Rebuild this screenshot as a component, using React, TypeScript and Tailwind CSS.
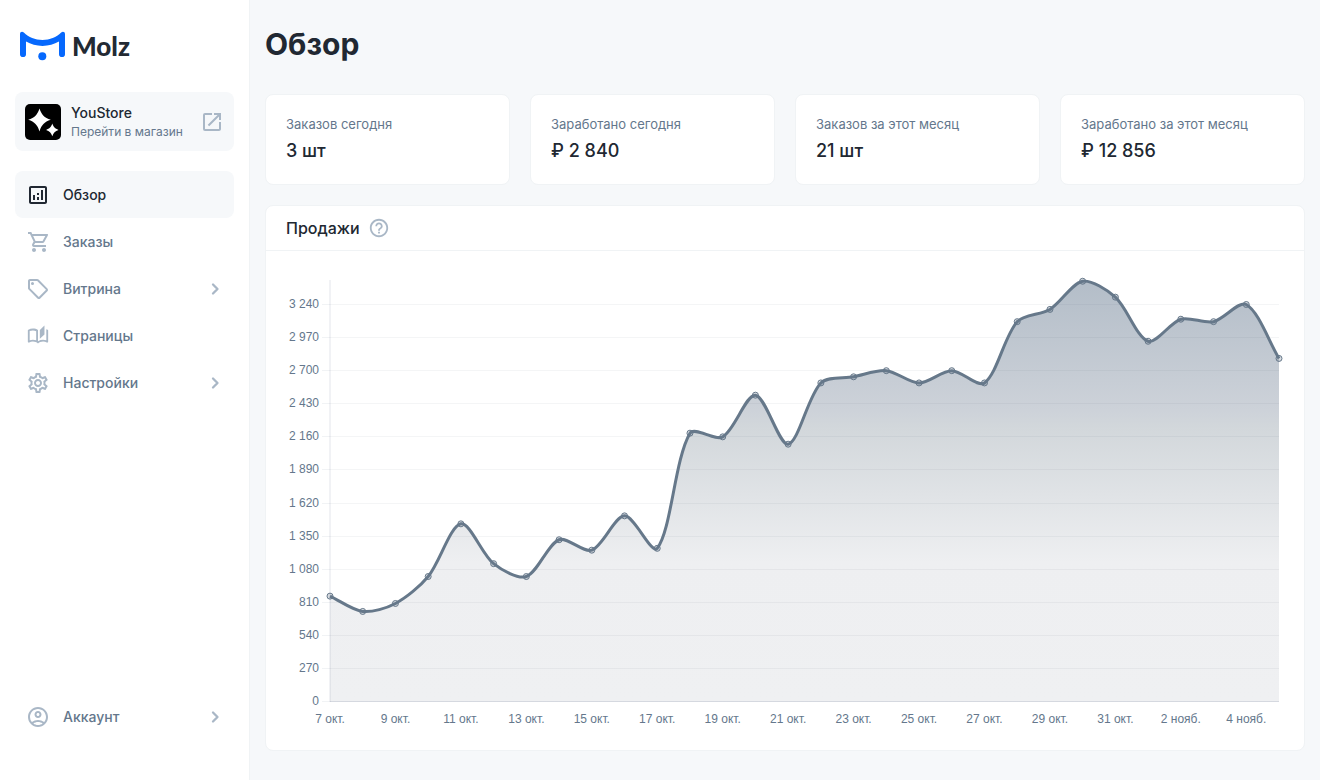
import { useEffect, useRef, useState } from "react";
import type { ReactNode } from "react";
import type { IconType } from "react-icons";
import {
  MdHelpOutline,
  MdOpenInNew,
  MdOutlineAccountCircle,
  MdOutlineAnalytics,
  MdOutlineAutoStories,
  MdOutlineSell,
  MdOutlineSettings,
  MdOutlineShoppingCart,
} from "react-icons/md";

const sales = [
  860, 735, 800, 1020, 1450, 1125, 1020, 1320, 1235, 1515, 1250, 2190, 2160, 2500, 2100,
  2600, 2650, 2700, 2600, 2700, 2600, 3100, 3200, 3430, 3300, 2940, 3120, 3100, 3240, 2800,
];

const stats = [
  { label: "Заказов сегодня", value: "3 шт" },
  { label: "Заработано сегодня", value: "₽ 2 840" },
  { label: "Заказов за этот месяц", value: "21 шт" },
  { label: "Заработано за этот месяц", value: "₽ 12 856" },
];

const PLOT = { left: 44, right: 5, top: 9, bottom: 430, height: 460 };
const STEP = 270;
const MAX = 3436;

type Point = { x: number; y: number };

function dayLabel(index: number) {
  const day = index + 7;
  return day <= 31 ? `${day} окт.` : `${day - 31} нояб.`;
}

function formatValue(value: number) {
  return value >= 1000
    ? `${Math.floor(value / 1000)} ${String(value % 1000).padStart(3, "0")}`
    : String(value);
}

/* Cubic spline whose handles are weighted by the distance to each neighbour. */
function smoothPath(points: Point[], tension = 0.3) {
  const handles = points.map((p, i) => {
    const prev = points[i - 1] ?? p;
    const next = points[i + 1] ?? p;
    const before = Math.hypot(p.x - prev.x, p.y - prev.y);
    const after = Math.hypot(next.x - p.x, next.y - p.y);
    const total = before + after || 1;
    const a = (tension * before) / total;
    const b = (tension * after) / total;
    const clamp = (y: number) => Math.max(PLOT.top, Math.min(PLOT.bottom, y));
    return {
      inX: p.x - a * (next.x - prev.x),
      inY: clamp(p.y - a * (next.y - prev.y)),
      outX: p.x + b * (next.x - prev.x),
      outY: clamp(p.y + b * (next.y - prev.y)),
    };
  });
  return points
    .map((p, i) =>
      i === 0
        ? `M${p.x},${p.y}`
        : `C${handles[i - 1].outX},${handles[i - 1].outY} ${handles[i].inX},${handles[i].inY} ${p.x},${p.y}`,
    )
    .join(" ");
}

function SalesChart() {
  const box = useRef<HTMLDivElement>(null);
  const [width, setWidth] = useState(998);

  useEffect(() => {
    const node = box.current;
    if (!node) return;
    const update = () => setWidth(node.clientWidth);
    update();
    const observer = new ResizeObserver(update);
    observer.observe(node);
    return () => observer.disconnect();
  }, []);

  const right = width - PLOT.right;
  const scaleY = (v: number) => PLOT.bottom + 0.5 - (v / MAX) * (PLOT.bottom - PLOT.top);
  const points = sales.map((v, i) => ({
    x: PLOT.left + (i * (right - PLOT.left)) / (sales.length - 1),
    y: scaleY(v),
  }));
  const line = smoothPath(points);
  const ticks = Array.from({ length: 13 }, (_, i) => i * STEP);

  return (
    <div ref={box} className="w-full min-w-0">
      <svg
        width={width}
        height={PLOT.height}
        role="img"
        aria-label="Продажи"
        className="block overflow-visible font-['Liberation_Sans',Arial,sans-serif] text-[12px]"
      >
        <defs>
          <linearGradient
            id="area"
            gradientUnits="userSpaceOnUse"
            x1="0"
            x2="0"
            y1={PLOT.top}
            y2={PLOT.bottom}
          >
            <stop offset="0" stopColor="#b3bdc8" />
            <stop offset="0.31" stopColor="#cdd2d9" />
            <stop offset="0.35" stopColor="#d2d7db" />
            <stop offset="0.67" stopColor="#eeeff1" />
            <stop offset="1" stopColor="#eff0f2" />
          </linearGradient>
        </defs>
        <path
          d={`${line} L${right},${PLOT.bottom + 0.5} L${PLOT.left},${PLOT.bottom + 0.5} Z`}
          fill="url(#area)"
        />
        {ticks.map((v) => {
          const y = Math.round(scaleY(v) - 0.5) + 0.5;
          return (
            <g key={v}>
              <line
                x1={PLOT.left - 8}
                x2={PLOT.left}
                y1={y}
                y2={y}
                stroke="#3c506e"
                strokeOpacity={0.07}
              />
              <line
                x1={PLOT.left}
                x2={right}
                y1={y}
                y2={y}
                stroke="#3c506e"
                strokeOpacity={v === 0 ? 0.18 : 0.06}
              />
              <text x={PLOT.left - 11} y={y + 3.5} textAnchor="end" fill="#64778c">
                {formatValue(v)}
              </text>
            </g>
          );
        })}
        <line
          x1={PLOT.left}
          x2={PLOT.left}
          y1={PLOT.top}
          y2={PLOT.bottom + 1}
          stroke="#3c506e"
          strokeOpacity={0.14}
        />
        <path d={line} fill="none" stroke="#66788a" strokeWidth={3} />
        {points.map((p, i) => (
          <circle
            key={i}
            cx={p.x}
            cy={p.y}
            r={3}
            fill="#66788a"
            fillOpacity={0.25}
            stroke="#66788a"
            strokeWidth={1}
          />
        ))}
        {points.map((p, i) =>
          i % 2 === 0 ? (
            <text key={i} x={p.x} y={PLOT.bottom + 22} textAnchor="middle" fill="#64778c">
              {dayLabel(i)}
            </text>
          ) : null,
        )}
      </svg>
    </div>
  );
}

function Logo() {
  return (
    <a href="#" aria-label="Molz" className="mx-[5px] flex h-8 items-center gap-[7px]">
      <svg width="45" height="30" viewBox="0 0 45 30" className="shrink-0">
        <path
          d="M0 3.2C0 .8 2.3 .2 3.8 1.6C8.8 6.3 15 9 22.5 9C30 9 36.2 6.3 41.2 1.6C42.7 .2 45 .8 45 3.2V23.2Q45 26 42 26Q39 26 39 23.2V10.6C34.2 13.4 28.5 15 22.5 15C16.5 15 10.8 13.4 6 10.6V23.2Q6 26 3 26Q0 26 0 23.2Z"
          fill="#0668fd"
        />
        <circle cx="22.3" cy="25.2" r="4" fill="#0668fd" />
      </svg>
      <span className="font-['Lato',sans-serif] text-[26px] leading-8 font-black text-[#232a33]">
        Molz
      </span>
    </a>
  );
}

function Chevron() {
  return (
    <svg width="24" height="24" viewBox="0 0 24 24" className="text-[#a9b7c6]">
      <path
        d="M11 7.5L15.5 12L11 16.5"
        fill="none"
        stroke="currentColor"
        strokeWidth="2.3"
        strokeLinecap="round"
        strokeLinejoin="round"
      />
    </svg>
  );
}

function NavItem({
  icon: Icon,
  viewBox = "0 0 24 24",
  children,
  active = false,
  expandable = false,
}: {
  icon: IconType;
  viewBox?: string;
  children: ReactNode;
  active?: boolean;
  expandable?: boolean;
}) {
  const tone = active ? "bg-[#f6f8fa] text-[#212832]" : "text-[#64778c]";
  return (
    <a
      href="#"
      aria-current={active ? "page" : undefined}
      className={`flex h-[47px] items-center rounded-lg pr-2 pl-[11px] text-[14px] font-medium ${tone}`}
    >
      <Icon
        size={24}
        viewBox={viewBox}
        className={active ? "text-[#212832]" : "text-[#a9b7c6]"}
      />
      <span className="ml-[13px] flex-1">{children}</span>
      {expandable && <Chevron />}
    </a>
  );
}

export default function App() {
  return (
    <div className="flex min-h-screen bg-[#f6f8fa] font-['Inter',sans-serif] text-[#212832]">
      <aside className="flex w-[250px] shrink-0 flex-col border-r border-[#f0f3f5] bg-white px-[15px] pt-[30px] pb-10">
        <Logo />
        <a
          href="#"
          className="mt-[30px] flex h-[59px] items-center rounded-lg bg-[#f6f8fa] px-[10px]"
        >
          <svg width="36" height="36" viewBox="0 0 36 36" className="shrink-0">
            <rect width="36" height="36" rx="5" fill="#000" />
            <path
              d="M14.5 4.5C16.6 10.8 19.2 13.6 25.8 15.8C19.2 18 16.6 20.8 14.5 27.5C12.4 20.8 9.8 18 3.2 15.8C9.8 13.6 12.4 10.8 14.5 4.5Z"
              fill="#fff"
            />
            <path
              d="M27.3 19.6C28.5 23.2 30 24.7 33.5 25.9C30 27.1 28.5 28.6 27.3 32.2C26.1 28.6 24.6 27.1 21.1 25.9C24.6 24.7 26.1 23.2 27.3 19.6Z"
              fill="#fff"
            />
          </svg>
          <span className="ml-[10px] flex flex-1 flex-col pb-0.5">
            <span className="text-[14px] leading-[22px] font-medium">YouStore</span>
            <span className="text-[12px] leading-4 text-[#64778c]">Перейти в магазин</span>
          </span>
          <MdOpenInNew size={24} className="text-[#a9b7c6]" />
        </a>
        <nav className="mt-5 flex flex-1 flex-col">
          <NavItem icon={MdOutlineAnalytics} active>
            Обзор
          </NavItem>
          <NavItem icon={MdOutlineShoppingCart} viewBox="-1 0 24 24">
            Заказы
          </NavItem>
          <NavItem icon={MdOutlineSell} expandable>
            Витрина
          </NavItem>
          <NavItem icon={MdOutlineAutoStories} viewBox="-1 -1 26 26">
            Страницы
          </NavItem>
          <NavItem icon={MdOutlineSettings} expandable>
            Настройки
          </NavItem>
          <div className="mt-auto">
            <NavItem icon={MdOutlineAccountCircle} expandable>
              Аккаунт
            </NavItem>
          </div>
        </nav>
      </aside>

      <main className="flex min-w-0 flex-1 flex-col px-[15px] pt-6 pb-[29px]">
        <h1 className="text-[30px] leading-10 font-bold">Обзор</h1>
        <section className="mt-[30px] grid grid-cols-4 gap-5">
          {stats.map((s) => (
            <div
              key={s.label}
              className="rounded-lg border border-[#f0f3f5] bg-white px-5 pt-[19px] pb-5"
            >
              <div className="text-[13px] leading-5 text-[#64778c]">{s.label}</div>
              <div className="mt-1 text-[18px] leading-[26px] font-medium">{s.value}</div>
            </div>
          ))}
        </section>
        <section className="mt-5 rounded-lg border border-[#f0f3f5] bg-white">
          <header className="flex h-[45px] items-center gap-2 border-b border-[#f0f3f5] px-5">
            <h2 className="text-[16px] font-medium">Продажи</h2>
            <button type="button" aria-label="Справка" className="text-[#a9b7c6]">
              <MdHelpOutline size={22} />
            </button>
          </header>
          <div className="px-5 pt-5 pb-[19px]">
            <SalesChart />
          </div>
        </section>
      </main>
    </div>
  );
}
